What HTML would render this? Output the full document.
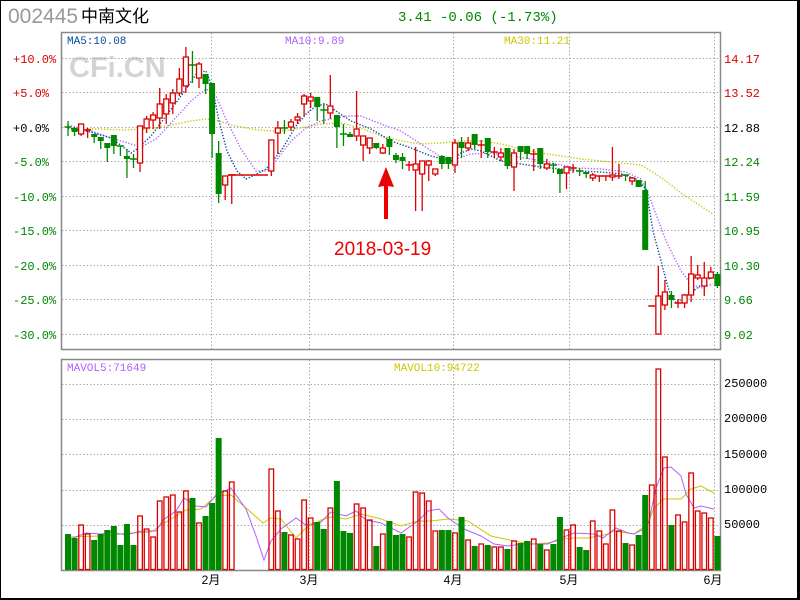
<!DOCTYPE html>
<html><head><meta charset="utf-8"><style>
html,body{margin:0;padding:0;background:#fff}
#w{position:relative;width:800px;height:600px;overflow:hidden;box-sizing:border-box;border:1px solid #000;border-right:3px solid #000;border-bottom:2px solid #000}
svg{position:absolute;left:0;top:0}
</style></head><body><div id="w">
<svg id="s" width="800" height="600" viewBox="0 0 800 600" xmlns="http://www.w3.org/2000/svg" font-family="Liberation Mono, monospace">
<text x="7" y="22" font-family="Liberation Sans, sans-serif" font-size="21" fill="#999">002445</text>
<text x="80" y="21" font-family="Liberation Sans, 'Noto Sans CJK SC', sans-serif" font-size="17" fill="#000">中南文化</text>
<text x="397" y="20" font-size="14" fill="#080">3.41 -0.06 (-1.73%)</text>
<text x="68" y="76" font-family="Liberation Sans, sans-serif" font-weight="bold" font-size="29" fill="#d4d4d4">CFi.CN</text>
<g id="grid" stroke="#aaa" stroke-dasharray="1.5 2" stroke-width="1"></g>
<rect x="60.5" y="31.5" width="659" height="317" fill="none" stroke="#888" stroke-width="1.5"/>
<rect x="60.5" y="358.5" width="659" height="211" fill="none" stroke="#888" stroke-width="1.5"/>
<text x="66" y="43" font-size="11" fill="#004c9f">MA5:10.08</text>
<text x="284" y="43" font-size="11" fill="#b060ff">MA10:9.89</text>
<text x="503" y="43" font-size="11" fill="#c8c800">MA30:11.21</text>
<text x="66" y="370" font-size="11" fill="#b060ff">MAVOL5:71649</text>
<text x="393" y="370" font-size="11" fill="#c8c800">MAVOL10:94722</text>
<g font-size="12">
<text x="12" y="62" fill="#d00">+10.0%</text>
<text x="12" y="96" fill="#d00">+5.0%</text>
<text x="12" y="131" fill="#000">+0.0%</text>
<text x="12" y="165" fill="#080">-5.0%</text>
<text x="12" y="200" fill="#080">-10.0%</text>
<text x="12" y="234" fill="#080">-15.0%</text>
<text x="12" y="269" fill="#080">-20.0%</text>
<text x="12" y="303" fill="#080">-25.0%</text>
<text x="12" y="338" fill="#080">-30.0%</text>
<text x="723" y="62" fill="#d00">14.17</text>
<text x="723" y="96" fill="#d00">13.52</text>
<text x="723" y="131" fill="#000">12.88</text>
<text x="723" y="165" fill="#080">12.24</text>
<text x="723" y="200" fill="#080">11.59</text>
<text x="723" y="234" fill="#080">10.95</text>
<text x="723" y="269" fill="#080">10.30</text>
<text x="723" y="303" fill="#080">9.66</text>
<text x="723" y="338" fill="#080">9.02</text>
<text x="723" y="386" fill="#000">250000</text>
<text x="723" y="421" fill="#000">200000</text>
<text x="723" y="457" fill="#000">150000</text>
<text x="723" y="492" fill="#000">100000</text>
<text x="723" y="527" fill="#000">50000</text>
</g>
<g font-family="Liberation Sans, 'Noto Sans CJK SC', sans-serif" font-size="12" fill="#000" text-anchor="middle">
<text x="210" y="583">2月</text><text x="308" y="583">3月</text><text x="452" y="583">4月</text><text x="568" y="583">5月</text><text x="712" y="583">6月</text>
</g>
<g id="ma"></g>
<g id="c"></g>
<text x="333" y="254" font-family="Liberation Sans, sans-serif" font-size="19" fill="#e00">2018-03-19</text>
<polygon points="385,166 377,186 383,185 383,218 387,218 387,185 393,186" fill="#e00"/>
</svg></div>
<script>
var S=document.getElementById('s'),NS='http://www.w3.org/2000/svg';
function el(p,t,a){var e=document.createElementNS(NS,t);for(var k in a)e.setAttribute(k,a[k]);document.getElementById(p).appendChild(e);return e;}
[57.5,91.5,126.5,160.5,195.5,229.5,264.5,298.5,333.5].forEach(function(y){el('grid','line',{x1:61,x2:719,y1:y,y2:y});});
[383.5,418.5,453.5,489.5,524.5].forEach(function(y){el('grid','line',{x1:61,x2:719,y1:y,y2:y});});
[210.5,308.5,452.5,568.5,713.5].forEach(function(x){el('grid','line',{x1:x,x2:x,y1:32,y2:348});el('grid','line',{x1:x,x2:x,y1:359,y2:569});});
function pl(pts,col,dash,w){el('ma','polyline',{points:pts.map(function(p){return p.join(',')}).join(' '),fill:'none',stroke:col,'stroke-width':w||1.3,'stroke-dasharray':dash||'none'});}
pl([[67,128],[100,128],[120,129],[150,128],[170,124],[190,120],[205,118],[215,119],[230,124],[250,128],[270,130],[290,129],[320,123],[340,122],[360,127],[380,135],[400,140],[420,143],[440,142],[460,140],[480,140],[500,143],[520,148],[540,152],[560,155],[580,158],[600,160],[620,162],[640,164],[650,170],[665,180],[680,192],[695,202],[712,213]],'#c8c800','1.3 1.7',1.4);
pl([[67,124],[90,130],[110,137],[130,143],[140,146],[155,138],[170,122],[190,100],[205,88],[215,95],[225,118],[240,148],[255,170],[265,170],[275,160],[290,140],[305,127],[320,120],[330,118],[345,115],[360,115],[380,123],[400,130],[420,143],[440,156],[455,158],[470,153],[490,152],[510,155],[530,158],[550,162],[575,167],[600,168],[625,171],[640,178],[650,200],[665,240],[680,270],[690,283],[700,287],[712,283]],'#b060ff','1.3 1.7',1.4);
pl([[67,127],[90,131],[110,137],[130,152],[136,148],[150,135],[165,115],[180,95],[196,72],[205,70],[211,85],[218,120],[226,150],[236,170],[245,178],[252,175],[265,168],[280,150],[295,125],[305,113],[315,105],[325,103],[335,110],[350,120],[370,128],[390,140],[410,147],[430,155],[450,160],[460,152],[470,148],[480,150],[500,160],[520,163],[540,166],[560,168],[580,170],[600,171],[620,173],[635,178],[645,188],[652,230],[660,260],[668,290],[675,302],[685,295],[695,288],[705,280],[712,275]],'#004c9f','1.3 1.7',1.4);
// candles: [color, bodyTop, bodyBot, high, low]
var C1=[['g',126,126,120,135],['g',127,131,126,135],['r',123,133,123,135],['r',129,129,127,137],['g',133,136,133,142],['g',136,140,136,148],['g',142,147,142,161],['g',134,145,134,153],['g',145,145,145,155],['g',155,158,148,177],['g',158,158,153,167],['r',125,162,125,171],['r',118,127,115,132],['r',114,119,111,128],['r',103,117,87,128],['r',98,113,93,123],['r',92,102,88,113],['r',78,92,67,95],['r',56,85,46,92],['g',64,64,50,82],['r',63,77,61,87],['g',73,83,73,93],['g',82,133,82,157],['g',152,193,140,202],['r',175,184,175,199],['r',174,174,174,203]];
var C2=[['r',139,170,139,175],['r',127,132,120,153],['g',127,127,119,133],['r',121,126,118,130],['r',116,119,112,123],['r',95,103,93,115],['r',96,100,92,107],['g',96,106,96,120],['g',109,109,102,123],['r',105,112,74,118],['g',114,126,114,147],['g',133,133,123,145],['g',133,136,131,136],['r',128,135,90,140],['r',135,144,135,160],['r',137,147,137,153],['g',142,147,142,148],['r',147,152,143,153],['g',138,146,135,154],['g',154,159,152,162],['g',156,160,152,168],['r',164,164,160,170],['r',163,169,146,210],['r',160,173,160,210],['r',160,164,159,180],['r',168,173,168,175],['g',155,163,154,168],['g',156,163,156,168],['r',142,164,138,172],['g',141,147,136,157],['r',142,147,136,150],['g',133,144,133,148],['r',144,144,139,157],['g',137,151,137,157],['r',151,151,146,157],['r',152,156,147,160],['g',147,165,147,168],['r',152,166,148,190],['g',145,151,145,159],['g',145,153,145,158],['r',153,153,148,170],['g',147,163,147,168],['r',163,167,158,169],['g',164,164,162,172],['g',168,173,168,192],['r',166,172,166,188],['r',167,167,163,172],['g',170,170,167,175],['g',171,173,171,177],['r',174,177,172,180],['r',175,175,175,181],['r',175,175,175,180],['r',174,176,146,180],['r',175,175,163,178],['g',174,174,174,180],['r',177,180,176,184],['g',179,186,179,186],['g',189,249,180,249],['r',305,305,305,305],['r',295,333,265,333],['r',291,304,279,309],['g',294,299,290,307],['r',302,302,298,307],['r',294,302,293,307],['r',273,294,255,301],['r',274,277,264,279],['r',277,285,261,295],['r',271,277,266,278],['g',273,285,271,287]];
function cx1(i){return 67+i*6.55;} function cx2(j){return 270.3+j*6.56;}
function candle(x,d){var col=d[0]=='r'?'#d00':'#080';
 el('c','line',{x1:x,x2:x,y1:d[3],y2:d[4],stroke:col,'stroke-width':1.3});
 if(d[2]-d[1]<1.5){el('c','line',{x1:x-3.5,x2:x+3.5,y1:d[1],y2:d[1],stroke:col,'stroke-width':1.5});}
 else if(d[0]=='r'){el('c','rect',{x:x-2.5,y:d[1],width:5,height:d[2]-d[1],fill:'#fff',stroke:col,'stroke-width':1.3});}
 else{el('c','rect',{x:x-3,y:d[1],width:6,height:d[2]-d[1],fill:col});}}
C1.forEach(function(d,i){candle(cx1(i),d);});
el('c','line',{x1:227,x2:267,y1:174,y2:174,stroke:'#d00','stroke-width':1.5});
C2.forEach(function(d,j){candle(cx2(j),d);});
// volume
var V1=[['g',533],['g',537],['r',524],['r',533],['g',539],['g',533],['g',529],['g',525],['g',544],['g',523],['g',544],['r',515],['r',528],['r',536],['r',500],['r',496],['r',494],['r',511],['r',490],['g',497],['r',522],['g',515],['g',502],['g',437],['r',490],['r',481]];
var V2=[['r',468],['r',510],['g',531],['r',534],['r',538],['r',499],['r',517],['g',521],['g',528],['r',507],['g',480],['g',530],['g',532],['r',503],['r',507],['r',519],['g',545],['r',533],['g',520],['g',534],['g',533],['r',536],['r',491],['r',492],['r',500],['r',530],['g',529],['g',529],['r',532],['g',516],['r',539],['g',545],['r',543],['g',544],['r',546],['r',546],['g',548],['r',540],['g',542],['g',540],['r',538],['g',543],['r',549],['g',543],['g',516],['r',529],['r',524],['g',546],['g',549],['r',520],['r',530],['r',543],['r',509],['r',530],['g',542],['r',544],['g',534],['g',494],['r',484],['r',368],['r',456],['g',524],['r',514],['r',521],['r',472],['r',510],['r',512],['r',517],['g',535]];
function vb(x,d){if(d[0]=='g')el('c','rect',{x:x-3,y:d[1],width:6,height:569-d[1],fill:'#080'});else el('c','rect',{x:x-2.3,y:d[1],width:4.6,height:568.5-d[1],fill:'none',stroke:'#d00','stroke-width':1.3});}
V1.forEach(function(d,i){vb(cx1(i),d);});V2.forEach(function(d,j){vb(cx2(j),d);});
pl([[67,536],[100,535],[130,532],[150,531],[165,521],[185,509],[200,508],[215,495],[230,494],[245,507],[262,522],[270,517],[280,518],[295,537],[305,527],[320,519],[330,516],[345,518],[360,513],[380,518],[400,525],[417,520],[430,520],[447,518],[467,520],[490,535],[513,540],[530,543],[547,542],[567,537],[587,537],[607,533],[613,530],[633,533],[647,523],[653,507],[663,498],[680,498],[690,488],[700,485],[713,492]],'#c8c800','none',1);
pl([[67,539],[85,532],[100,533],[110,531],[125,534],[140,530],[155,530],[162,519],[175,510],[183,497],[195,505],[205,506],[215,494],[230,487],[245,508],[255,535],[263,559],[270,540],[280,528],[295,517],[305,524],[320,521],[330,511],[345,515],[355,510],[365,519],[380,522],[400,532],[417,520],[427,510],[438,508],[447,517],[463,528],[480,535],[493,543],[507,545],[520,543],[547,543],[560,537],[573,532],[593,533],[602,537],[615,527],[627,532],[633,533],[643,528],[648,520],[655,487],[663,467],[670,466],[680,475],[685,493],[693,507],[700,505],[713,508]],'#b060ff','none',1);
</script>
</body></html>
